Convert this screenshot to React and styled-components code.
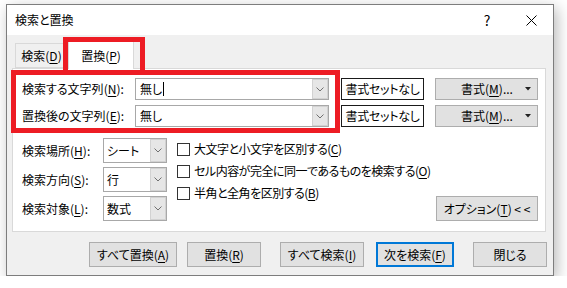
import React from "react";
import styled, { createGlobalStyle } from "styled-components";

const Global = createGlobalStyle`
  html, body { margin: 0; padding: 0; background: #fff; }
  body {
    font-family: "Noto Sans CJK JP", "Noto Sans", sans-serif;
    font-size: 12px;
    color: #000;
    font-feature-settings: "palt";
  }
  * { box-sizing: border-box; }
  u { text-underline-offset: 2px; }
`;

const Page = styled.div`
  padding: 4px 0 0 6px;
`;

const Dialog = styled.div`
  position: relative;
  width: 548px;
  height: 272px;
  border: 1px solid #7d7d7d;
  background: #f0f0f0;
  box-shadow: 3px 4px 14px rgba(0, 0, 0, 0.28);
  display: flex;
  flex-direction: column;
`;

const TitleBar = styled.div`
  height: 30px;
  background: #fff;
  display: flex;
  align-items: center;
  padding-left: 8px;
`;

const Title = styled.div`
  flex: 1;
  line-height: 1;
`;

const TitleButton = styled.div`
  width: 44px;
  height: 30px;
  display: flex;
  align-items: center;
  justify-content: center;
  font-size: 14px;
`;

const Body = styled.div`
  flex: 1;
  padding: 6px 7px 0 5px;
  display: flex;
  flex-direction: column;
`;

const TabStrip = styled.div`
  position: relative;
  z-index: 1;
  display: flex;
  align-items: flex-end;
  height: 28px;
  padding-left: 3px;
  margin-bottom: -1px;
`;

const Tab = styled.div`
  width: ${(p) => p.$w}px;
  height: ${(p) => (p.$active ? 28 : 25)}px;
  margin-bottom: ${(p) => (p.$active ? 0 : 1)}px;
  background: ${(p) => (p.$active ? "#fff" : "#f0f0f0")};
  border: 1px solid #d9d9d9;
  border-bottom: ${(p) => (p.$active ? "none" : "1px solid #d9d9d9")};
  display: flex;
  align-items: center;
  justify-content: center;
  line-height: 1;
  white-space: nowrap;
`;

const Panel = styled.div`
  background: #fff;
  border: 1px solid #d9d9d9;
  height: 164px;
  padding: 9px 7px 10px 9px;
  display: flex;
  flex-direction: column;
`;

const FieldRow = styled.div`
  display: flex;
  align-items: center;
  height: 22px;
  & + & { margin-top: 5px; }
`;

const Label = styled.div`
  width: ${(p) => p.$w}px;
  line-height: 1;
  white-space: nowrap;
`;

const Combo = styled.div`
  width: ${(p) => p.$w}px;
  height: ${(p) => p.$h}px;
  border: 1px solid #a8a8a8;
  background: #fff;
  display: flex;
`;

const ComboText = styled.div`
  flex: 1;
  display: flex;
  align-items: center;
  padding-left: ${(p) => p.$pl || 4}px;
  line-height: 1;
  white-space: nowrap;
`;

const Caret = styled.span`
  display: inline-block;
  width: 1px;
  height: 14px;
  background: #000;
  margin-left: 1px;
`;

const DropArea = styled.div`
  width: 16px;
  background: #e6e6e6;
  border: 1px solid #d2d2d2;
  display: flex;
  align-items: center;
  justify-content: center;
`;

const FormatState = styled.div`
  margin-left: 12px;
  width: 83px;
  height: 22px;
  border: 1px solid #1a1a1a;
  background: #fff;
  display: flex;
  align-items: center;
  justify-content: center;
  letter-spacing: -0.3px;
  line-height: 1;
  white-space: nowrap;
`;

const FormatButton = styled.div`
  margin-left: 11px;
  width: 103px;
  height: 22px;
  background: #e1e1e1;
  border: 1px solid #adadad;
  display: flex;
  align-items: center;
  padding: 0 6px 0 13px;
  line-height: 1;
  white-space: nowrap;
`;

const FormatText = styled.div`
  flex: 1;
  text-align: center;
`;

const Options = styled.div`
  display: flex;
  margin-top: 11px;
`;

const SelectCol = styled.div`
  display: flex;
  flex-direction: column;
  gap: 4px;
`;

const OptRow = styled.div`
  display: flex;
  align-items: center;
  height: 25px;
`;

const CheckCol = styled.div`
  margin-left: 10px;
  display: flex;
  flex-direction: column;
`;

const CheckRow = styled.div`
  height: 22px;
  display: flex;
  align-items: center;
  gap: 4px;
  line-height: 1;
  white-space: nowrap;
`;

const CheckLabel = styled.span`
  letter-spacing: -0.5px;
`;

const CheckBox = styled.span`
  flex: none;
  width: 13px;
  height: 13px;
  border: 1px solid #333;
  background: #fff;
`;

const Button = styled.div`
  flex: none;
  width: ${(p) => p.$w}px;
  height: 25px;
  background: #e1e1e1;
  border: ${(p) => (p.$focus ? "2px solid #0078d7" : "1px solid #adadad")};
  display: flex;
  align-items: center;
  justify-content: center;
  line-height: 1;
  white-space: nowrap;
`;

const OptionButton = styled(Button)`
  margin-left: auto;
  align-self: flex-end;
`;

const ButtonBar = styled.div`
  display: flex;
  justify-content: flex-end;
  gap: 19px;
  margin-top: 10px;
  margin-right: -1px;
`;

const ButtonGroup = styled.div`
  display: flex;
  gap: ${(p) => p.$gap}px;
`;

const Highlight = styled.div`
  position: absolute;
  left: ${(p) => p.$x}px;
  top: ${(p) => p.$y}px;
  width: ${(p) => p.$w}px;
  height: ${(p) => p.$h}px;
  border: 5px solid #ed1c24;
  pointer-events: none;
  z-index: 5;
`;

const Chevron = () => (
  <svg width="8" height="5" viewBox="0 0 8 5">
    <path d="M0.5 0.5 L4 4 L7.5 0.5" fill="none" stroke="#707070" strokeWidth="1" />
  </svg>
);

const TriDown = () => (
  <svg width="6" height="4" viewBox="0 0 6 4">
    <path d="M0 0 H6 L3 3.5 Z" fill="#222" />
  </svg>
);

const CloseIcon = () => (
  <svg width="11" height="11" viewBox="0 0 11 11">
    <path d="M0.5 0.5 L10.5 10.5 M10.5 0.5 L0.5 10.5" stroke="#000" strokeWidth="1" />
  </svg>
);

const Field = ({ label, mn, value, caret }) => (
  <FieldRow>
    <Label $w={113}>
      {label}(<u>{mn}</u>):
    </Label>
    <Combo $w={194} $h={22}>
      <ComboText>
        {value}
        {caret && <Caret />}
      </ComboText>
      <DropArea>
        <Chevron />
      </DropArea>
    </Combo>
    <FormatState>書式セットなし</FormatState>
    <FormatButton>
      <FormatText>
        書式(<u>M</u>)...
      </FormatText>
      <TriDown />
    </FormatButton>
  </FieldRow>
);

const SelectRow = ({ label, mn, value }) => (
  <OptRow>
    <Label $w={81}>
      {label}(<u>{mn}</u>):
    </Label>
    <Combo $w={64} $h={25}>
      <ComboText $pl={3}>{value}</ComboText>
      <DropArea>
        <Chevron />
      </DropArea>
    </Combo>
  </OptRow>
);

const Check = ({ label, mn }) => (
  <CheckRow>
    <CheckBox />
    <CheckLabel>
      {label}(<u>{mn}</u>)
    </CheckLabel>
  </CheckRow>
);

export default function App() {
  return (
    <Page>
      <Global />
      <Dialog>
        <TitleBar>
          <Title>検索と置換</Title>
          <TitleButton>?</TitleButton>
          <TitleButton>
            <CloseIcon />
          </TitleButton>
        </TitleBar>
        <Body>
          <TabStrip>
            <Tab $w={53}>
              検索(<u>D</u>)
            </Tab>
            <Tab $w={66} $active>
              置換(<u>P</u>)
            </Tab>
          </TabStrip>
          <Panel>
            <Field label="検索する文字列" mn="N" value="無し" caret />
            <Field label="置換後の文字列" mn="E" value="無し" />
            <Options>
              <SelectCol>
                <SelectRow label="検索場所" mn="H" value="シート" />
                <SelectRow label="検索方向" mn="S" value="行" />
                <SelectRow label="検索対象" mn="L" value="数式" />
              </SelectCol>
              <CheckCol>
                <Check label="大文字と小文字を区別する" mn="C" />
                <Check label="セル内容が完全に同一であるものを検索する" mn="O" />
                <Check label="半角と全角を区別する" mn="B" />
              </CheckCol>
              <OptionButton $w={102}>
                オプション(<u>T</u>) &lt; &lt;
              </OptionButton>
            </Options>
          </Panel>
          <ButtonBar>
            <ButtonGroup $gap={10}>
              <Button $w={88}>
                すべて置換(<u>A</u>)
              </Button>
              <Button $w={74}>
                置換(<u>R</u>)
              </Button>
            </ButtonGroup>
            <ButtonGroup $gap={12}>
              <Button $w={84}>
                すべて検索(<u>I</u>)
              </Button>
              <Button $w={78} $focus>
                次を検索(<u>F</u>)
              </Button>
            </ButtonGroup>
            <Button $w={74}>閉じる</Button>
          </ButtonBar>
        </Body>
        <Highlight $x={56} $y={32} $w={82} $h={38} />
        <Highlight $x={4} $y={65} $w={329} $h={63} />
      </Dialog>
    </Page>
  );
}
